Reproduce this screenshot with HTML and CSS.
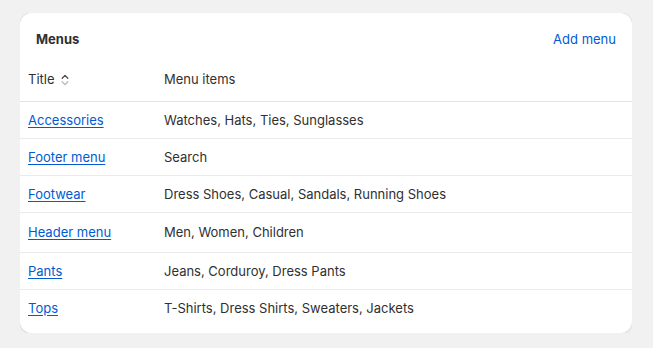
FILE: index.html
```html
<!DOCTYPE html>
<html lang="en">
<head>
<meta charset="utf-8">
<title>Menus</title>
<link rel="stylesheet" href="styles.css">
</head>
<body>
<div class="card">
  <div class="card-header">
    <h2 class="card-title">Menus</h2>
    <a class="action" href="#">Add menu</a>
  </div>
  <table class="menus">
    <thead>
      <tr>
        <th class="col-title">Title <svg class="sort" width="10" height="14" viewBox="0 0 10 14" aria-hidden="true"><path d="M2.2 5.2 L5 2.4 L7.8 5.2" fill="none" stroke="#4a4a4a" stroke-width="1.3" stroke-linecap="round" stroke-linejoin="round"/><path d="M2.2 8.8 L5 11.6 L7.8 8.8" fill="none" stroke="#b8b8b8" stroke-width="1.3" stroke-linecap="round" stroke-linejoin="round"/></svg></th>
        <th>Menu items</th>
      </tr>
    </thead>
    <tbody>
      <tr><td class="col-title"><a href="#">Accessories</a></td><td>Watches, Hats, Ties, Sunglasses</td></tr>
      <tr><td class="col-title"><a href="#">Footer menu</a></td><td>Search</td></tr>
      <tr><td class="col-title"><a href="#">Footwear</a></td><td>Dress Shoes, Casual, Sandals, Running Shoes</td></tr>
      <tr class="tall"><td class="col-title"><a href="#">Header menu</a></td><td>Men, Women, Children</td></tr>
      <tr><td class="col-title"><a href="#">Pants</a></td><td>Jeans, Corduroy, Dress Pants</td></tr>
      <tr><td class="col-title"><a href="#">Tops</a></td><td>T-Shirts, Dress Shirts, Sweaters, Jackets</td></tr>
    </tbody>
  </table>
</div>
</body>
</html>
```

FILE: styles.css
```css
html, body {
  background: #f1f1f1;
}
body {
  margin: 13px 21px 0 20px;
  font-family: Inter, "Noto Sans", sans-serif;
  font-size: 13px;
  line-height: 20px;
  font-weight: 420;
  color: #303030;
}
.card {
  background: #fff;
  border-radius: 12px;
  box-shadow: 0 0 0 1px #e3e3e3, 0 1px 2px rgba(0, 0, 0, 0.16);
  padding: 16px 0 7px;
  overflow: hidden;
}
.card-header {
  display: flex;
  justify-content: space-between;
  align-items: center;
  padding: 0 16px;
}
.card-title {
  margin: 0;
  font-size: 13px;
  line-height: 20px;
  font-weight: 700;
  color: #303030;
}
.action {
  color: #005bd3;
  text-decoration: none;
}
.menus {
  width: 100%;
  border-collapse: collapse;
}
.menus th {
  text-align: left;
  font-weight: 420;
  padding: 20px 8px 12px;
  border-bottom: 1px solid #e3e3e3;
  white-space: nowrap;
}
.menus td {
  padding: 8px 8px;
  border-bottom: 1px solid #ebebeb;
}
.menus tbody tr:last-child td {
  border-bottom: none;
}
.menus tr.tall td {
  padding: 9px 8px 10px;
}
.col-title {
  width: 120px;
}
.menus a {
  color: #005bd3;
  text-decoration: underline;
  text-underline-offset: 2px;
}
.sort {
  vertical-align: -3px;
  margin-left: 2px;
}
```
